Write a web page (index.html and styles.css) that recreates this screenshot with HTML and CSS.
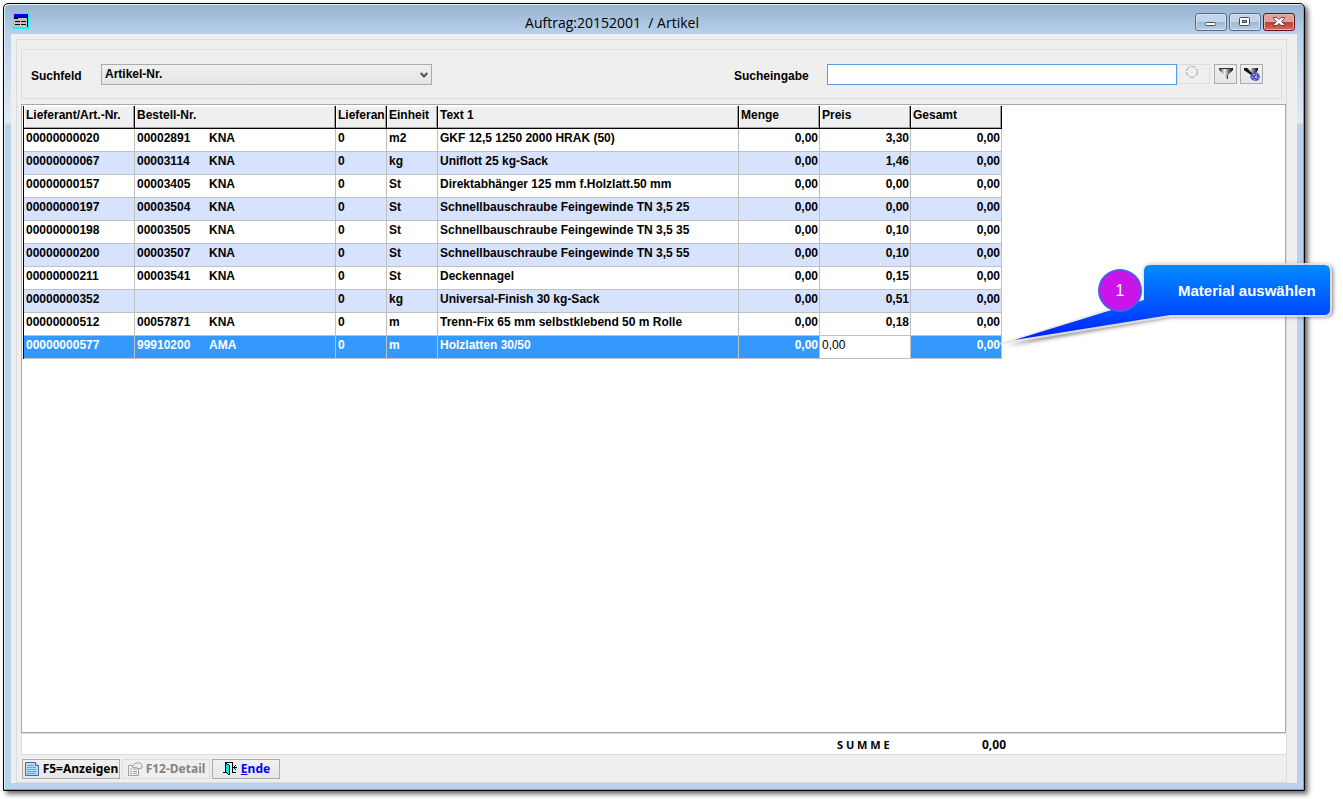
FILE: index.html
```
<!DOCTYPE html>
<html lang="de">
<head>
<meta charset="utf-8">
<title>Auftrag:20152001 / Artikel</title>
<link rel="stylesheet" href="styles.css">
</head>
<body>
<div class="window">
  <header class="titlebar">
    <svg class="app-icon" width="16" height="16" viewBox="0 0 16 16" shape-rendering="crispEdges">
      <path fill="#00ffff" d="M0 0h16v16H0z"/>
      <path fill="#c0c0c0" d="M1 1h14v13H1z"/>
      <path fill="#0000ff" d="M1 1h13v3H1z"/>
      <path fill="#000" d="M1 4h13v1H1zM7 3h1v1H7zM14 1h1v13h-1zM2 8h5v1H2zM8 8h5v1H8zM2 11h5v1H2zM8 11h5v1H8zM1 5h4v1H1z"/>
    </svg>
    <h1 class="title">Auftrag:20152001&nbsp; / Artikel</h1>
    <div class="caption-buttons">
      <button class="caption" type="button" aria-label="Minimieren">
        <svg width="12" height="12" viewBox="0 0 12 12"><rect x=".5" y="6.500" width="10" height="3" rx="1" fill="#fff" stroke="#474c57"/></svg>
      </button>
      <button class="caption" type="button" aria-label="Maximieren">
        <svg width="12" height="12" viewBox="0 0 12 12"><rect x=".5" y="1.500" width="10" height="8" rx="1" fill="#fff" stroke="#474c57"/><rect x="3.500" y="4.500" width="4" height="2" fill="#8aa9c8" stroke="#474c57"/></svg>
      </button>
      <button class="caption caption-close" type="button" aria-label="Schließen">
        <svg width="12" height="12" viewBox="0 0 12 12"><path d="M.5 1.500h3.500L6 3.500l2-2h3.500v1L8.500 5.500l3 3v1H8L6 7.500l-2 2H.5v-1l3-3-3-3z" fill="#fff" stroke="#53404a"/></svg>
      </button>
    </div>
  </header>

  <main class="client">
    <div class="frame">
      <form class="search">
        <label class="search-label" for="field">Suchfeld</label>
        <div class="select-box">
          <select class="select" id="field"><option>Artikel-Nr.</option></select>
          <svg class="chevron" width="8" height="6" viewBox="0 0 8 6"><path d="M.7 1L4 4.500 7.300 1" fill="none" stroke="#505050" stroke-width="2"/></svg>
        </div>
        <label class="search-label query-label" for="query">Sucheingabe</label>
        <input class="query" id="query" type="text">
        <button class="tool tool-wait" type="button" aria-label="Suchen" disabled>
          <svg width="14" height="14" viewBox="0 0 14 14"><circle cx="7.500" cy="7.500" r="5.500" fill="none" stroke="#fff"/><circle cx="7" cy="7" r="5.500" fill="none" stroke="#a0a0a0" stroke-dasharray="5 1"/></svg>
        </button>
        <button class="tool" type="button" aria-label="Filter">
          <svg width="16" height="16" viewBox="0 0 16 16"><defs><linearGradient id="fg"><stop offset="0" stop-color="#222"/><stop offset=".4" stop-color="#f4f4f4"/><stop offset=".6" stop-color="#999"/><stop offset="1" stop-color="#000"/></linearGradient></defs><path d="M1 2h14v2L9.500 9.500V13L7 11.500v-2L1 4z" fill="url(#fg)"/><path d="M2 2.500h12M9.500 9v4" stroke="#333" fill="none"/></svg>
        </button>
        <button class="tool" type="button" aria-label="Filter löschen">
          <svg width="16" height="16" viewBox="0 0 16 16"><path d="M0 2h14v2l-4 6v3l-3-2V9L0 4z" fill="url(#fg)"/><path d="M0 2h3l7 7-1 3-2-2V9L0 4z" fill="#111"/><path d="M8 7l3-1 3 1 2 3-1 4-3 1-4-1-2-3z" fill="#5555bd"/><path d="M9 8h2v1H9zM12 8h1v1h-1zM11 10h2v2h-2zM8 11h1v1H8zM14 12h1v1h-1zM10 13h1v1h-1z" fill="#b4b4fa"/></svg>
        </button>
      </form>

      <section class="grid-panel">
        <table class="grid">
          <colgroup><col class="c-art"><col class="c-order"><col class="c-unit"><col class="c-unit"><col class="c-text"><col class="c-qty"><col class="c-sum"><col class="c-sum"></colgroup>
          <thead>
            <tr><th>Lieferant/Art.-Nr.</th><th>Bestell-Nr.</th><th>Lieferan</th><th>Einheit</th><th>Text 1</th><th>Menge</th><th>Preis</th><th>Gesamt</th></tr>
          </thead>
          <tbody>
            <tr><td>00000000020</td><td><span class="order">00002891</span>KNA</td><td>0</td><td>m2</td><td>GKF 12,5 1250 2000 HRAK (50)</td><td class="num">0,00</td><td class="num">3,30</td><td class="num">0,00</td></tr>
            <tr><td>00000000067</td><td><span class="order">00003114</span>KNA</td><td>0</td><td>kg</td><td>Uniflott 25 kg-Sack</td><td class="num">0,00</td><td class="num">1,46</td><td class="num">0,00</td></tr>
            <tr><td>00000000157</td><td><span class="order">00003405</span>KNA</td><td>0</td><td>St</td><td>Direktabhänger 125 mm f.Holzlatt.50 mm</td><td class="num">0,00</td><td class="num">0,00</td><td class="num">0,00</td></tr>
            <tr><td>00000000197</td><td><span class="order">00003504</span>KNA</td><td>0</td><td>St</td><td>Schnellbauschraube Feingewinde TN 3,5 25</td><td class="num">0,00</td><td class="num">0,00</td><td class="num">0,00</td></tr>
            <tr><td>00000000198</td><td><span class="order">00003505</span>KNA</td><td>0</td><td>St</td><td>Schnellbauschraube Feingewinde TN 3,5 35</td><td class="num">0,00</td><td class="num">0,10</td><td class="num">0,00</td></tr>
            <tr><td>00000000200</td><td><span class="order">00003507</span>KNA</td><td>0</td><td>St</td><td>Schnellbauschraube Feingewinde TN 3,5 55</td><td class="num">0,00</td><td class="num">0,10</td><td class="num">0,00</td></tr>
            <tr><td>00000000211</td><td><span class="order">00003541</span>KNA</td><td>0</td><td>St</td><td>Deckennagel</td><td class="num">0,00</td><td class="num">0,15</td><td class="num">0,00</td></tr>
            <tr><td>00000000352</td><td></td><td>0</td><td>kg</td><td>Universal-Finish 30 kg-Sack</td><td class="num">0,00</td><td class="num">0,51</td><td class="num">0,00</td></tr>
            <tr><td>00000000512</td><td><span class="order">00057871</span>KNA</td><td>0</td><td>m</td><td>Trenn-Fix 65 mm selbstklebend 50 m Rolle</td><td class="num">0,00</td><td class="num">0,18</td><td class="num">0,00</td></tr>
            <tr class="selected"><td>00000000577</td><td><span class="order">99910200</span>AMA</td><td>0</td><td>m</td><td>Holzlatten 30/50</td><td class="num">0,00</td><td class="editing"><input class="cell-input" type="text" value="0,00" aria-label="Preis"></td><td class="num">0,00</td></tr>
          </tbody>
        </table>
      </section>

      <div class="total"><span class="total-label">S U M M E</span><span class="total-value">0,00</span></div>

      <footer class="actions">
        <button class="action" type="button">
          <svg width="16" height="16" viewBox="0 0 16 16"><path d="M1.500 1.500h10l3 3v10h-13z" fill="#b9d8f8" stroke="#3d6da8"/><path d="M11.500 1.500v3h3" fill="#fff" stroke="#3d6da8"/><path d="M3 4.500h7M3 6.500h9M3 8.500h9M3 10.500h9M3 12.500h9" stroke="#6aa3e0"/></svg>
          F5=Anzeigen
        </button>
        <button class="action action-detail" type="button" disabled>
          <svg width="16" height="16" viewBox="0 0 16 16"><path d="M1.500 4.500h10v10h-10z" fill="#f4f4f4" stroke="#a0a0a0"/><path d="M3 8h2M6 8h4M3 10.500h2M6 10.500h4M3 12.500h2M6 12.500h4" stroke="#a0a0a0"/><path d="M5 5l4-3h4l2 2v3l-4 1-2-2-3 1z" fill="#eee" stroke="#a0a0a0"/></svg>
          F12-Detail
        </button>
        <button class="action action-end" type="button">
          <svg width="16" height="16" viewBox="0 0 16 16" shape-rendering="crispEdges"><path d="M3 1h8v1H3zM3 1h1v11H3zM10 1h1v11h-1zM1 11h3v1H1zM10 11h4v1h-4zM7 4h1v10H7zM4 2h1v1H4zM5 3h2v1H5zM4 11h1v1H4zM5 12h1v1H5zM6 13h1v1H6zM11 6h4v1h-4zM12 5h1v3h-1zM13 4h1v1h-1zM13 8h1v1h-1z" fill="#000"/><path d="M4 3h1v1h2v9H6v-1H5v-1H4z" fill="#00e5e5"/></svg>
          <span><u>E</u>nde</span>
        </button>
      </footer>
    </div>
  </main>
</div>

<aside class="callout">
  <svg class="callout-shape" width="345" height="96" viewBox="0 0 345 96">
    <defs>
      <linearGradient id="blue" x1="0" y1="5" x2="0" y2="82" gradientUnits="userSpaceOnUse"><stop offset="0" stop-color="#008cff"/><stop offset=".65" stop-color="#0046ff"/><stop offset="1" stop-color="#0016ff"/></linearGradient>
      <filter id="soft" x="-10%" y="-20%" width="120%" height="150%"><feGaussianBlur stdDeviation="2"/></filter>
    </defs>
    <path d="M154 5h172q7 0 7 7v38q0 7-7 7H172L6 86l140-44V12q0-7 8-7z" fill="#000" opacity=".5" filter="url(#soft)"/>
    <path d="M150 3h174q8 0 8 8v38q0 8-8 8H172L-3 85v-1l145-46V11q0-8 8-8z" fill="#e6e6e6" opacity=".85"/>
    <path d="M150 5h174q6 0 6 6v38q0 6-6 6H170L14 80l130-40V11q0-6 6-6z" fill="url(#blue)"/>
  </svg>
  <span class="callout-badge">1</span>
  <span class="callout-text">Material auswählen</span>
</aside>
</body>
</html>
```
FILE: styles.css
```
* { box-sizing: border-box; }

body {
  margin: 0;
  height: 100vh;
  padding: 3px 38px 8px 3px;
  position: relative;
  overflow: hidden;
  background: #fff;
  color: #000;
  font: bold 12px/16px "Liberation Sans", Arial, sans-serif;
}

button, input, select { font: inherit; color: inherit; margin: 0; }

.window {
  display: flex;
  flex-direction: column;
  height: 100%;
  padding: 1px 7px 7px;
  border: 1px solid #000;
  border-radius: 5px 5px 0 0;
  background: linear-gradient(#97b2d0, #b9d1ea 30px, #e0eaf4 119px, #b9d1ea 120px);
  box-shadow: inset -1px -1px #34c3dc, inset 1px 1px #e4eef8, 3px 3px 5px rgba(0, 0, 0, .6);
}

.titlebar { display: flex; align-items: center; height: 29px; padding: 5px 2px 0; }
.app-icon { flex: none; margin: 0 0 3px; }
.title {
  flex: 1;
  margin: 0;
  padding-top: 2px;
  text-align: center;
  font: 14px/20px "Open Sans", "Noto Sans", sans-serif;
}
.caption-buttons { display: flex; gap: 2px; }
.caption {
  display: flex;
  align-items: center;
  justify-content: center;
  width: 32px;
  height: 18px;
  padding: 0;
  border: 1px solid #566b8a;
  border-radius: 3px;
  background: linear-gradient(#c3d5e8 50%, #9bb7d3 50%, #b8d0e8);
  box-shadow: inset 0 0 0 1px #d4e2f0;
}
.caption-close {
  border-color: #5b1420;
  background: linear-gradient(#e2a299 50%, #bf3e2c 50%, #d06b56);
  box-shadow: inset 0 0 0 1px #e8b0a6;
}

.client { display: flex; flex: 1; min-height: 0; padding: 5px 10px 0 5px; background: #efefef; }
.frame {
  display: flex;
  flex: 1;
  flex-direction: column;
  min-width: 0;
  padding: 9px 0 3px 4px;
  border: 1px solid #dcdcdc;
}

.search {
  display: flex;
  align-items: center;
  height: 50px;
  margin-right: 4px;
  padding: 0 18px 0 9px;
  border: 1px solid #dcdcdc;
}
.search-label { width: 70px; padding-top: 3px; }
.query-label { width: 93px; margin-left: auto; }
.select-box { position: relative; width: 331px; }
.select {
  display: block;
  width: 100%;
  height: 21px;
  padding: 0 3px;
  appearance: none;
  border: 1px solid #acacac;
  border-radius: 0;
  background: linear-gradient(#f0f0f0, #e5e5e5);
}
.chevron { position: absolute; top: 8px; right: 4px; }
.query { width: 350px; height: 21px; padding: 0 3px; border: 1px solid #569de5; background: #fff; outline: 0; }
.tool {
  display: flex;
  align-items: center;
  justify-content: center;
  width: 23px;
  height: 20px;
  margin-left: 3px;
  padding: 0;
  border: 1px solid #acacac;
  background: linear-gradient(#f0f0f0, #e5e5e5);
}
.tool-wait { width: 33px; margin: 0 1px 0 0; padding: 0 4px 4px 0; border-color: #dcdcdc; background: #efefef; }

.grid-panel {
  flex: 1;
  min-height: 0;
  margin-top: 5px;
  padding: 1px;
  overflow: hidden;
  border: 1px solid #a9a9ad;
  background: #fff;
}
.grid { width: 979px; table-layout: fixed; border-spacing: 0; border-left: 1px solid #000; }
.c-art { width: 111px; }
.c-order { width: 201px; }
.c-unit { width: 51px; }
.c-text { width: 301px; }
.c-qty { width: 81px; }
.c-sum { width: 91px; }
.grid th, .grid td {
  height: 23px;
  padding: 0 1px 4px 2px;
  overflow: hidden;
  white-space: nowrap;
  text-align: left;
  border-right: 1px solid #c0c0c0;
  border-bottom: 1px solid #c0c0c0;
}
.grid th {
  border-color: #000;
  background: #efefef;
  box-shadow: inset -1px -1px #a0a0a0, inset 1px 1px #fff;
}
.grid tbody tr:nth-child(even) { background: #d7e2fd; }
.grid .selected, .grid tbody .selected:nth-child(even) { background: #3399ff; color: #fff; }
.grid .num { text-align: right; }
.order { display: inline-block; width: 72px; }
.grid .editing { padding: 0; background: #fff; color: #000; }
.cell-input { display: block; width: 100%; height: 22px; padding: 0 2px 4px; border: 0; background: none; font-weight: normal; }

.total {
  display: flex;
  height: 22px;
  border: 1px solid #dcdcdc;
  border-right: 0;
  background: #fff;
  font: bold 11px/21px "Noto Sans", "Open Sans", sans-serif;
}
.total-label { padding-left: 815px; width: 925px; }
.total-value { width: 59px; text-align: right; font-size: 12px; }

.actions { display: flex; gap: 2px; padding: 4px 0 0 1px; font: bold 12px/16px "Noto Sans", "Open Sans", sans-serif; }
.action {
  display: flex;
  align-items: center;
  justify-content: center;
  gap: 3px;
  width: 98px;
  height: 20px;
  padding: 0;
  white-space: nowrap;
  border: 1px solid #acacac;
  background: linear-gradient(#f0f0f0, #e7e7e7);
}
.action svg { flex: none; }
.action-detail { width: 88px; border-color: #dcdcdc; background: #efefef; color: #838383; }
.action-end { width: 68px; color: #0000ff; }

.callout { position: absolute; top: 260px; left: 1000px; width: 343px; height: 96px; color: #fff; }
.callout-shape { display: block; overflow: visible; }
.callout-badge {
  position: absolute;
  top: 9px;
  left: 98px;
  width: 44px;
  height: 43px;
  border: 2px solid #4a5ce2;
  border-radius: 50%;
  background: #cb14ea;
  text-align: center;
  font: 16px/39px "Liberation Sans", sans-serif;
}
.callout-text { position: absolute; top: 21px; left: 178px; white-space: nowrap; font: bold 15px/20px "Liberation Sans", sans-serif; }
```
